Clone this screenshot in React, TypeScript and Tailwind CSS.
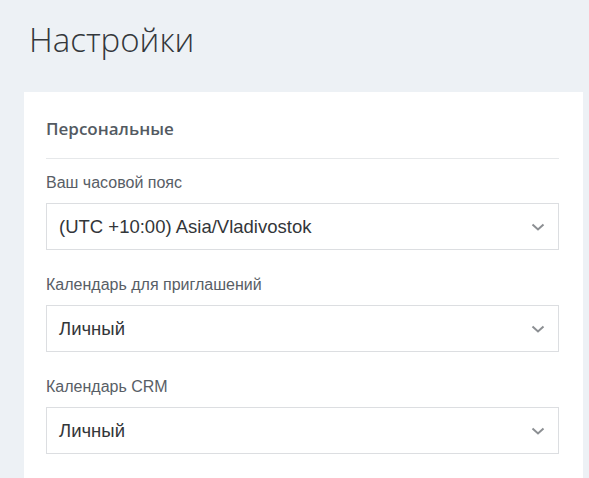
const fields = [
    { label: "Ваш часовой пояс", value: "(UTC +10:00) Asia/Vladivostok" },
    { label: "Календарь для приглашений", value: "Личный" },
    { label: "Календарь CRM", value: "Личный" },
];

const Chevron = () => (
    <svg width="14" height="8" viewBox="0 0 14 8" fill="none" className="shrink-0">
        <path d="M1.5 1.5L7 6.5L12.5 1.5" stroke="#8c8f93" strokeWidth="2" />
    </svg>
);

const SelectField = ({ label, value }: { label: string; value: string }) => (
    <div className="mt-[25px] first:mt-[14px]">
        <div className="mb-[10px] text-[16px] leading-[20px] text-[#585e66] font-['Liberation_Sans',Arial,sans-serif]">
            {label}
        </div>
        <div className="flex h-[47px] items-center justify-between border border-[#dcdee1] bg-white pl-[12px] pr-[13px]">
            <span className="text-[18.5px] text-[#333639] font-['Liberation_Sans',Arial,sans-serif]">{value}</span>
            <Chevron />
        </div>
    </div>
);

export default function App() {
    return (
        <div className="min-h-[478px] bg-[#edf1f5] pl-[24px] pr-[6px]">
            <h1 className="pl-[5px] pt-[16px] pb-[28px] text-[33px] leading-[48px] font-light text-[#33373b] font-['Open_Sans',sans-serif]">
                Настройки
            </h1>
            <div className="bg-white pl-[22px] pr-[24px] pt-[27px] pb-[30px]">
                <div className="border-b border-[#e6e8ea] pb-[19px] text-[17px] leading-[20px] font-semibold text-[#535a62] font-['Open_Sans',sans-serif]">
                    Персональные
                </div>
                <div className="flex flex-col">
                    {fields.map((f) => (
                        <SelectField key={f.label} label={f.label} value={f.value} />
                    ))}
                </div>
            </div>
        </div>
    );
}
